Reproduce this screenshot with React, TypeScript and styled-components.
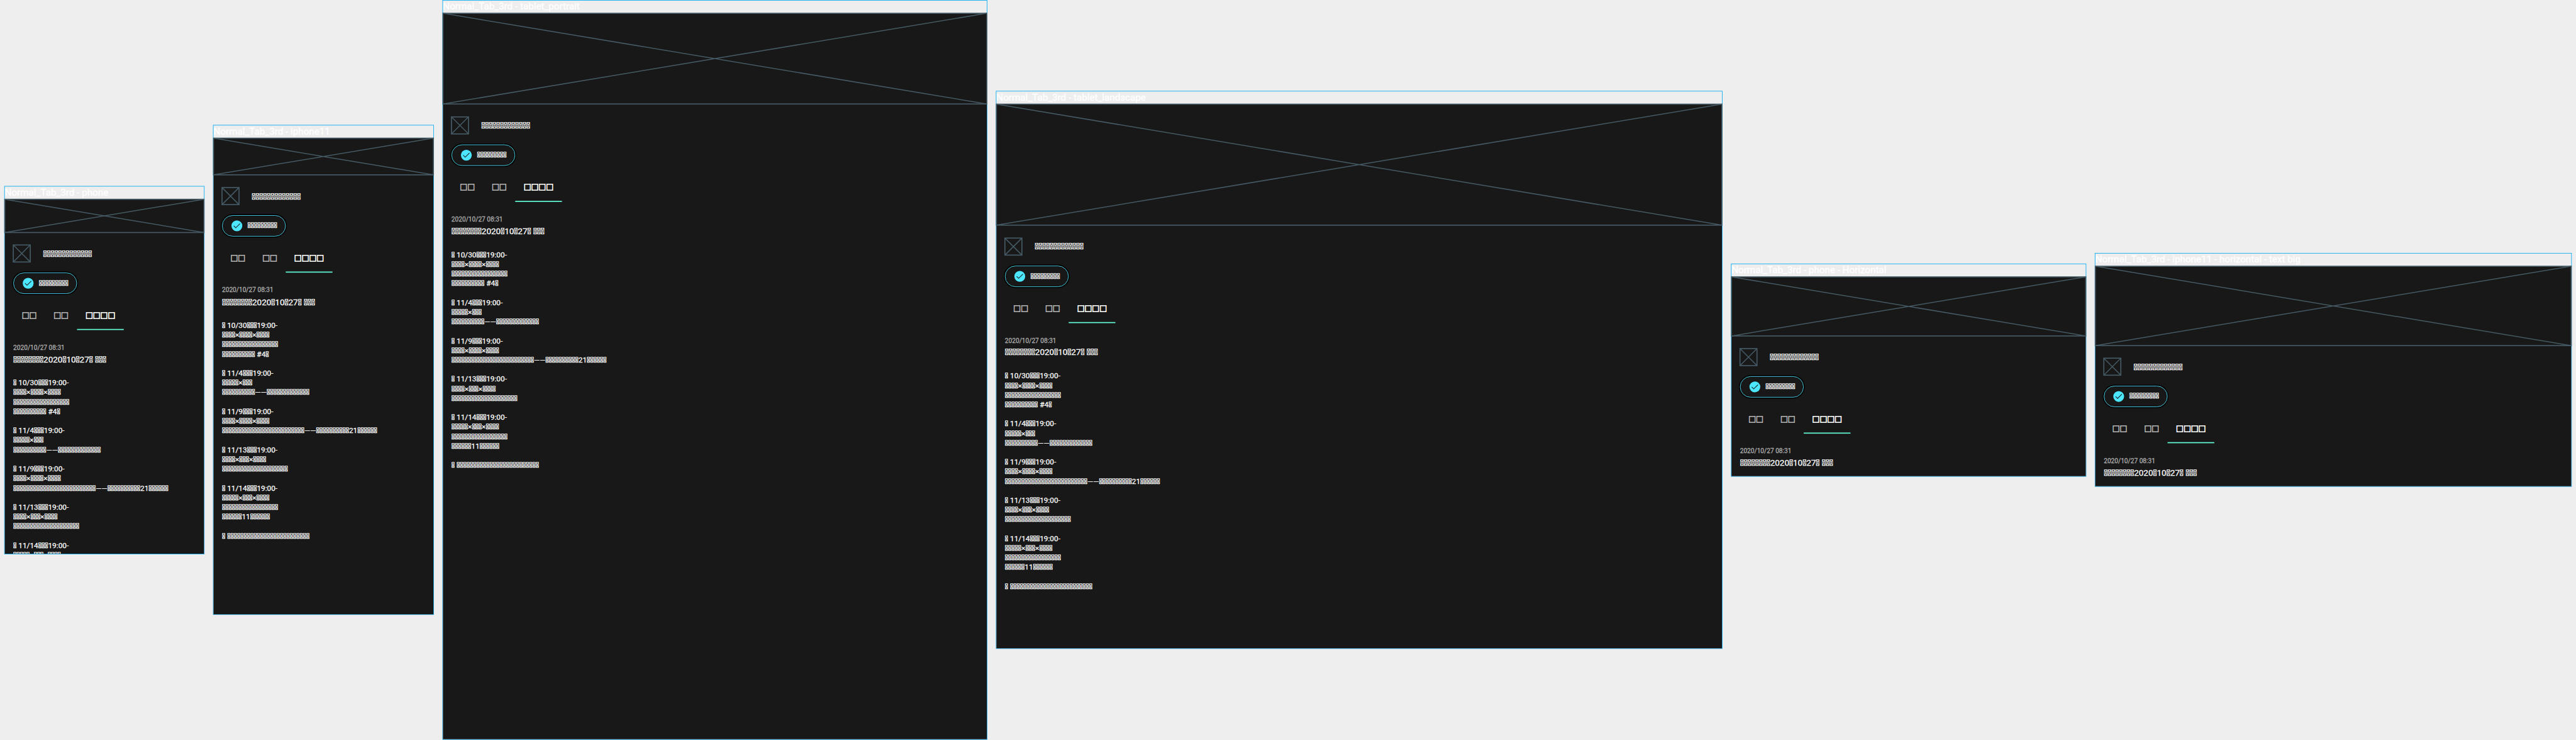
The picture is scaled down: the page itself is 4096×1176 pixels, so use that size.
import React from "react";
import styled, { createGlobalStyle } from "styled-components";

const GlobalStyle = createGlobalStyle`
  html, body { margin: 0; background: #eeeeee; }
  * { box-sizing: border-box; }
`;

const Viewport = styled.div`
  width: 100vw;
  height: 100vh;
  overflow: hidden;
`;

const Board = styled.main`
  width: 4850px;
  height: 1392px;
  padding: 0 8px;
  display: flex;
  align-items: center;
  gap: 16px;
  transform: scale(${4096 / 4850});
  transform-origin: 0 0;
  font-family: Roboto, sans-serif;
  font-weight: 400;
  -webkit-text-stroke: 0.3px;
  white-space: pre;
  color: #fff;
`;

const Device = styled.section<{ $width: number }>`
  flex: none;
  width: ${(p) => p.$width + 2}px;
  border: 1px solid #03a9f4;
`;

const DeviceName = styled.h2`
  margin: 0;
  height: 24px;
  font-size: 18px;
  line-height: 22px;
  font-weight: 400;
`;

const Screen = styled.div<{ $height: number }>`
  height: ${(p) => p.$height}px;
  background: #181818;
  display: flex;
  flex-direction: column;
`;

const Cross = styled.svg<{ $w: number; $h: number }>`
  flex: none;
  display: block;
  width: ${(p) => p.$w}px;
  height: ${(p) => p.$h}px;
  overflow: visible;
  fill: none;
  stroke: #455a64;
`;

const Content = styled.div`
  flex: 1;
  min-height: 0;
  overflow: hidden;
  padding: 23px 15px 0;
`;

const Profile = styled.header`
  display: flex;
  align-items: center;
  gap: 24px;
  padding: 1px 1px 0;
`;

const ProfileName = styled.span`
  padding-top: 1px;
  font-size: 16px;
  line-height: 20px;
`;

const Chip = styled.button`
  display: flex;
  align-items: center;
  gap: 8px;
  width: 120px;
  height: 40px;
  margin: 20px 1px;
  padding: 0 0 0 15px;
  border: 1px solid #4de6ff;
  border-radius: 20px;
  background: transparent;
  box-shadow: 0 0 0 2px #000, inset 0 0 0 1px rgba(0, 0, 0, 0.6);
  color: #fff;
  font: 400 14px/18px Roboto, sans-serif;
  -webkit-text-stroke: 0.3px;
  white-space: pre;
`;

const ChipLabel = styled.span`
  margin-top: -2px;
`;

const Tabs = styled.nav`
  display: flex;
  padding-left: 1px;
`;

const Tab = styled.span<{ $active?: boolean }>`
  height: 48px;
  padding: 0 16px;
  font: 400 14px/41px "Noto Sans CJK JP", sans-serif;
  -webkit-text-stroke: 1.1px;
  color: ${(p) => (p.$active ? "#fff" : "#b2b2b2")};
  border-bottom: 2px solid ${(p) => (p.$active ? "#64ffda" : "transparent")};
`;

const Article = styled.article`
  padding: 24px 1px 0;
`;

const Time = styled.time`
  display: block;
  font-size: 12px;
  line-height: 18px;
  color: #b2b2b2;
`;

const Headline = styled.h3`
  margin: 4.5px 0 25.5px;
  font-size: 16px;
  line-height: 18px;
  font-weight: 400;
`;

const Body = styled.p`
  margin: 0;
  font-size: 14px;
  line-height: 18px;
`;

const missing = (n: number) => "\u{10FFFD}".repeat(n);
const fill = (s: string) => s.replace(/\{(\d+)\}/g, (_, n) => missing(Number(n)));

const body = fill(
  [
    "{1} 10/30{3}19:00-",
    "{4}×{4}×{4}",
    "{17}",
    "{10} #4{1}",
    "",
    "{1} 11/4{3}19:00-",
    "{5}×{3}",
    "{10}——{13}",
    "",
    "{1} 11/9{3}19:00-",
    "{4}×{4}×{4}",
    "{25}——{10}21{6}",
    "",
    "{1} 11/13{3}19:00-",
    "{4}×{3}×{4}",
    "{20}",
    "",
    "{1} 11/14{3}19:00-",
    "{5}×{3}×{4}",
    "{17}",
    "{6}11{6}",
    "",
    "{1} {25}",
  ].join("\n")
);

const Placeholder = ({ w, h }: { w: number; h: number }) => (
  <Cross $w={w} $h={h} viewBox={`0 0 ${w} ${h}`}>
    <rect x="0" y="0" width={w} height={h} strokeWidth="2" />
    <path d={`M0 0L${w} ${h}M0 ${h}L${w} 0`} strokeWidth="1.8" />
  </Cross>
);

const CheckBadge = () => (
  <svg width="24" height="24" viewBox="0 0 24 24">
    <circle cx="12" cy="12" r="10.2" fill="#4de6ff" />
    <path d="M6.1 12L9.9 15.8L17.9 7.8" fill="none" stroke="#181818" strokeWidth="1.2" />
  </svg>
);

const devices = [
  { name: "Normal_Tab_3rd - phone", w: 375, h: 667 },
  { name: "Normal_Tab_3rd - iphone11", w: 414, h: 896 },
  { name: "Normal_Tab_3rd - tablet_portrait", w: 1024, h: 1366 },
  { name: "Normal_Tab_3rd - tablet_landscape", w: 1366, h: 1024 },
  { name: "Normal_Tab_3rd - phone - Horizontal", w: 667, h: 375 },
  { name: "Normal_Tab_3rd - iphone11 - horizontal - text big", w: 896, h: 414 },
];

export default function App() {
  return (
    <Viewport>
      <GlobalStyle />
      <Board>
        {devices.map((d) => (
          <Device key={d.name} $width={d.w}>
            <DeviceName>{d.name}</DeviceName>
            <Screen $height={d.h}>
              <Placeholder w={d.w} h={d.w / 6} />
              <Content>
                <Profile>
                  <Placeholder w={32} h={32} />
                  <ProfileName>{missing(13)}</ProfileName>
                </Profile>
                <Chip>
                  <CheckBadge />
                  <ChipLabel>{missing(9)}</ChipLabel>
                </Chip>
                <Tabs>
                  <Tab>□□</Tab>
                  <Tab>□□</Tab>
                  <Tab $active>□□□□</Tab>
                </Tabs>
                <Article>
                  <Time>2020/10/27 08:31</Time>
                  <Headline>{fill("{8}2020{1}10{1}27{1} {3}")}</Headline>
                  <Body>{body}</Body>
                </Article>
              </Content>
            </Screen>
          </Device>
        ))}
      </Board>
    </Viewport>
  );
}
